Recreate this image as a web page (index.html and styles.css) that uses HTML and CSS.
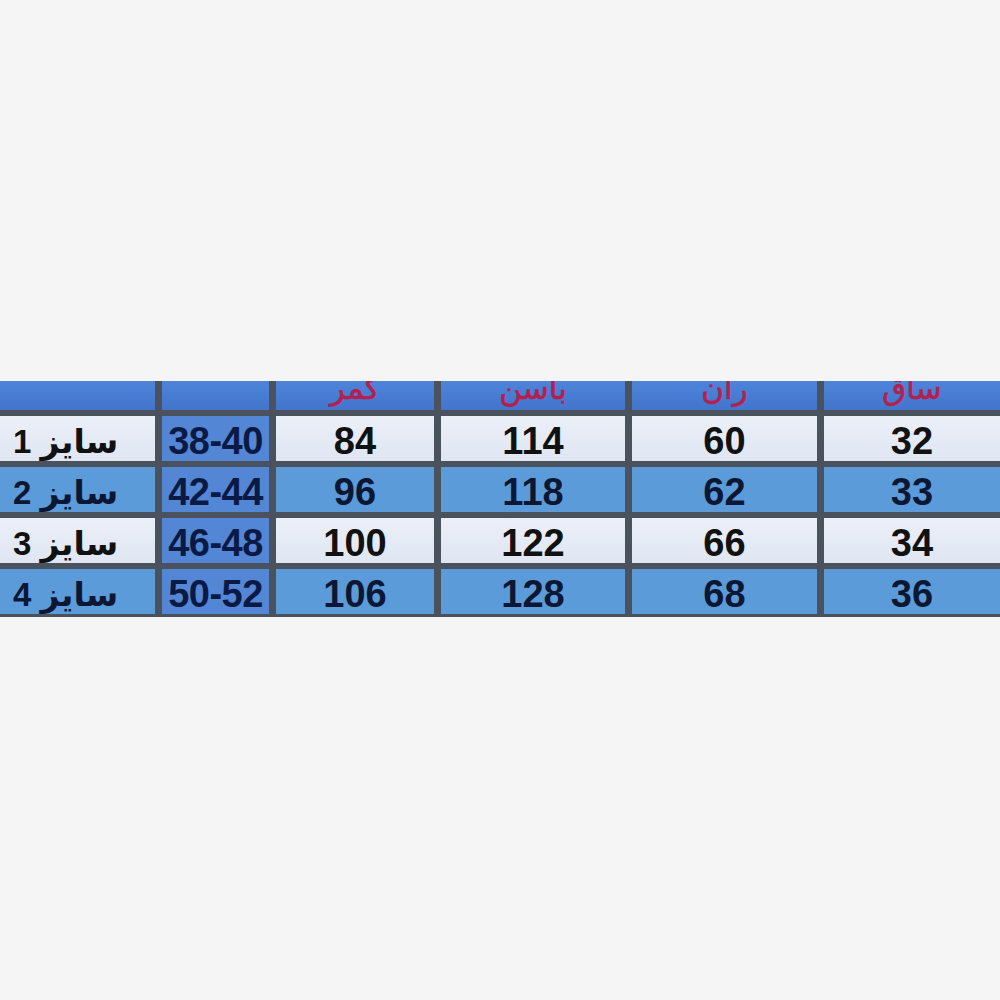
FILE: index.html
```html
<!DOCTYPE html>
<html lang="fa">
<head>
<meta charset="utf-8">
<title>جدول سایز</title>
<link rel="stylesheet" href="styles.css">
</head>
<body>
<div class="page">
  <div class="table">
    <div class="cell head"></div>
    <div class="cell head"></div>
    <div class="cell head"><span class="htext" dir="rtl">کمر</span></div>
    <div class="cell head"><span class="htext" dir="rtl">باسن</span></div>
    <div class="cell head"><span class="htext" dir="rtl">ران</span></div>
    <div class="cell head"><span class="htext" dir="rtl">ساق</span></div>

    <div class="cell light name"><span dir="rtl">سایز 1</span></div>
    <div class="cell range">38-40</div>
    <div class="cell light">84</div>
    <div class="cell light">114</div>
    <div class="cell light">60</div>
    <div class="cell light">32</div>

    <div class="cell blue name"><span dir="rtl">سایز 2</span></div>
    <div class="cell range">42-44</div>
    <div class="cell blue">96</div>
    <div class="cell blue">118</div>
    <div class="cell blue">62</div>
    <div class="cell blue">33</div>

    <div class="cell light name"><span dir="rtl">سایز 3</span></div>
    <div class="cell range">46-48</div>
    <div class="cell light">100</div>
    <div class="cell light">122</div>
    <div class="cell light">66</div>
    <div class="cell light">34</div>

    <div class="cell blue name"><span dir="rtl">سایز 4</span></div>
    <div class="cell range">50-52</div>
    <div class="cell blue">106</div>
    <div class="cell blue">128</div>
    <div class="cell blue">68</div>
    <div class="cell blue">36</div>
  </div>
</div>
</body>
</html>
```

FILE: styles.css
```css
html, body {
  margin: 0;
  padding: 0;
  background: #f5f5f5;
}

.page {
  width: 1000px;
  height: 1000px;
  padding-top: 381px;
  box-sizing: border-box;
  overflow: hidden;
}

.table {
  display: grid;
  grid-template-columns: 155px 107px 158px 184px 185px 176px;
  grid-template-rows: 29px 45px 45px 45px 45px;
  column-gap: 7px;
  row-gap: 6px;
  background: #4a525e;
  padding-bottom: 3px;
  font-family: "Liberation Sans", "DejaVu Sans", sans-serif;
  font-weight: bold;
}

.cell {
  display: flex;
  align-items: center;
  justify-content: center;
  padding-top: 5px;
  box-sizing: border-box;
  font-size: 38px;
  color: #111;
  overflow: hidden;
}

.head {
  background: linear-gradient(#4d84da, #4275cb);
  align-items: flex-start;
  padding-top: 0;
}

.htext {
  display: block;
  font-family: "DejaVu Sans", sans-serif;
  font-weight: normal;
  font-size: 31px;
  line-height: 30px;
  margin-top: -8px;
  color: #b51f4e;
  -webkit-text-stroke: 0.6px #b51f4e;
}

.light {
  background: linear-gradient(#ebeff8, #dfe6f2);
}

.blue {
  background: #5b9bd9;
  color: #0c1733;
}

.range {
  background: #5486d6;
  color: #0b1a45;
  letter-spacing: -0.5px;
}

.name {
  justify-content: flex-start;
  padding-left: 13px;
  font-size: 33px;
}
```
